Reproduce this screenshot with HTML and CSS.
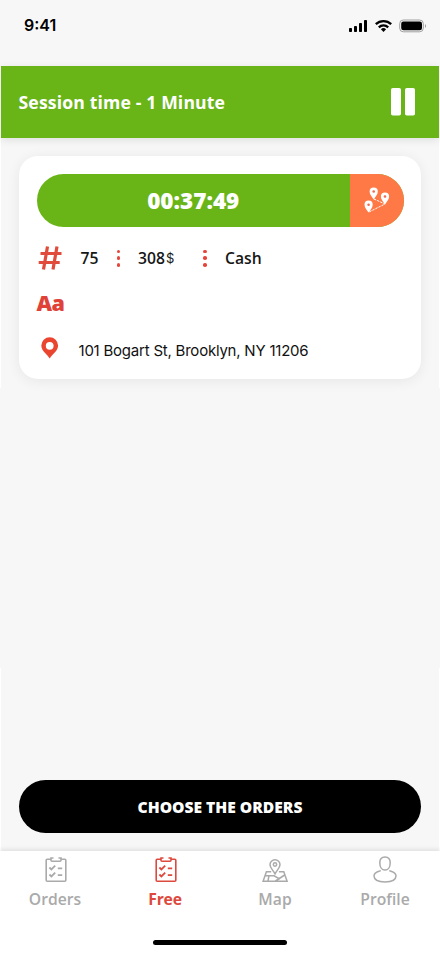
FILE: index.html
```
<!DOCTYPE html>
<html lang="en">
<head>
<meta charset="utf-8">
<title>Free orders</title>
<link rel="stylesheet" href="styles.css">
</head>
<body>
<div class="screen">
  <div class="status">
    <span class="clock">9:41</span>
    <svg class="status-icons" width="78" height="14" viewBox="0 0 78 14">
      <rect x="0" y="9" width="3" height="4" rx=".8"/><rect x="5" y="7" width="3" height="6" rx=".8"/><rect x="10" y="4" width="3" height="9" rx=".8"/><rect x="15" y="1" width="3" height="12" rx=".8"/>
      <g fill="none" stroke="#000" stroke-width="2.300"><path d="M26.800 5.200a11.200 11.200 0 0 1 15.400 0"/><path d="M29.800 8.300a6.800 6.800 0 0 1 9.400 0"/></g>
      <path d="M34.500 12.900l-2.600-2.600a3.700 3.700 0 0 1 5.200 0z"/>
      <rect x="50.700" y="1" width="23.600" height="11.800" rx="3.600" fill="none" stroke="#a0a0a0"/>
      <rect x="52.200" y="2.500" width="20.800" height="8.800" rx="2.200"/>
      <path d="M76 5v4q2-2 0-4z" fill="#999"/>
    </svg>
  </div>
  <main class="content">
    <header class="session">
      <span class="session-title">Session time - 1 Minute</span>
      <svg width="24" height="28" viewBox="0 0 24 28" fill="#fff"><rect width="10" height="27.500" rx="1.800"/><rect x="14" width="10" height="27.500" rx="1.800"/></svg>
    </header>
    <section class="card">
      <div class="timer">
        <div class="time"><span>00:37:49</span></div>
        <div class="route">
          <svg width="28" height="28" viewBox="0 0 28 28">
            <g fill="none" stroke="#fff" stroke-width="1" stroke-dasharray="2.400 1"><path d="M11 13l11 5L6 26"/></g>
            <g fill="#fff"><path id="pin" d="M10.700 13.400C9 10.500 6.600 8.600 6.600 5.500a4.100 4.100 0 0 1 8.200 0C14.800 8.600 12.400 10.500 10.700 13.400z"/><use href="#pin" x="11.300" y="5"/><use href="#pin" x="-5.100" y="13.200"/></g>
            <g fill="#f06a50"><circle cx="10.700" cy="5.500" r="1.300"/><circle cx="22" cy="10.500" r="1.300"/><circle cx="5.600" cy="18.700" r="1.300"/></g>
          </svg>
        </div>
      </div>
      <div class="facts">
        <svg class="hash" width="24" height="24" viewBox="0 0 24 24"><path d="M9.500.500L5.500 23.500M19 .500L15 23.500M2.500 7.500H23.500M.700 16.500H21.700" fill="none" stroke="#e04b3b" stroke-width="3.200"/></svg>
        <span class="number">75</span>
        <span class="dots"><i></i><i></i><i></i></span>
        <span class="amount">308</span><span class="currency">$</span>
        <span class="dots second"><i></i><i></i><i></i></span>
        <span class="method">Cash</span>
      </div>
      <div class="note">Aa</div>
      <div class="place">
        <svg width="18" height="22" viewBox="0 0 18 22"><path fill="#e9452f" fill-rule="evenodd" d="M8.700 21.600C7 18.200.300 14.200.300 8.600a8.400 8.400 0 0 1 16.800 0C17.100 14.200 10.400 18.200 8.700 21.600zM8.700 4.900a3.900 3.900 0 1 0 0 7.800 3.900 3.900 0 0 0 0-7.800z"/></svg>
        <span class="address">101 Bogart St, Brooklyn, NY 11206</span>
      </div>
    </section>
    <div class="choose"><span>CHOOSE THE ORDERS</span></div>
  </main>
  <nav class="tabs">
    <div class="tab">
      <svg class="list-icon" width="28" height="28" viewBox="0 0 28 28"><g id="list" fill="none" stroke="currentColor" stroke-width="1.600"><path d="M9 3.300H5.200a1 1 0 0 0-1 1v20a1 1 0 0 0 1 1h17.600a1 1 0 0 0 1-1v-20a1 1 0 0 0-1-1H19"/><path d="M11.500 2H9v2.300a1 1 0 0 0 1 1h8a1 1 0 0 0 1-1V2h-2.500"/><path d="M7.400 11.500l2 2L13.200 9.700M7.400 18.500l2 2 3.800-3.800M15.800 12.400h4.400M15.800 19.200h4.400" stroke-width="1.800"/></g></svg>
      <span>Orders</span>
    </div>
    <div class="tab active">
      <svg class="list-icon" width="28" height="28" viewBox="0 0 28 28"><use href="#list"/></svg>
      <span>Free</span>
    </div>
    <div class="tab">
      <svg class="map-icon" width="28" height="28" viewBox="0 0 28 28" fill="none" stroke="currentColor" stroke-width="1.500"><path d="M14 17.800C12.400 14.500 9 12 9 8.700a5 5 0 0 1 10 0c0 3.300-3.400 5.800-5 9.100z"/><circle cx="14" cy="8.500" r="1.700"/><path d="M10.200 15.700H5.400L2.100 25.200h24l-3.300-9.500h-4.900M4 19.500l9 .3 6 3.400M8 19.500l-1 5.500M24.400 18.500L14.500 25"/></svg>
      <span>Map</span>
    </div>
    <div class="tab">
      <svg class="profile-icon" width="28" height="28" viewBox="0 0 28 28" fill="none" stroke="currentColor" stroke-width="1.500"><path d="M14 .900c-3.200 0-5.200 2.300-5.200 5.800 0 4.500 2.200 7.300 5.200 7.300s5.200-2.800 5.200-7.300c0-3.500-2-5.800-5.200-5.800z"/><path d="M9.800 14.600c-3.700 1.500-6.800 2-6.800 5.200 0 3.900 3.500 6.200 11 6.200s11-2.300 11-6.200c0-3.200-3.100-3.700-6.800-5.200"/></svg>
      <span>Profile</span>
    </div>
  </nav>
  <div class="home"></div>
</div>
</body>
</html>
```
FILE: styles.css
```
* { box-sizing: border-box; }
body { margin: 0; background: #f7f7f7; font-family: "Open Sans", "Noto Sans", sans-serif; }
svg { display: block; flex: none; }
span { white-space: nowrap; }
.screen { width: 440px; height: 953px; display: flex; flex-direction: column; background: #f7f7f7; overflow: hidden; }
.status { height: 66px; padding: 19px 13px 0 24px; display: flex; justify-content: space-between; align-items: flex-start; }
.clock { font: 600 16px/13px Inter, sans-serif; }
.content { height: 785px; display: flex; flex-direction: column; padding: 0 1px; background: linear-gradient(#fff 0 322px, #f7f7f7 322px 602px, #fff 602px) 0 0 / 1px 100% no-repeat, linear-gradient(#fff 0 322px, #f7f7f7 322px 602px, #fff 602px) 100% 0 / 1px 100% no-repeat; }
.session { height: 71.500px; flex: none; background: #69b517; color: #fff; display: flex; align-items: center; justify-content: space-between; padding: 0 24px 0 17.500px; box-shadow: 0 2px 8px rgba(0,0,0,.1); }
.session-title { padding-top: 1px; font-size: 17.600px; font-weight: 700; letter-spacing: .150px; }
.card { width: 402px; height: 223px; margin: 18px 0 0 18px; padding: 18px 17.500px; flex: none; background: #fff; border-radius: 19px; box-shadow: 0 2px 14px rgba(0,0,0,.07); }
.timer { height: 53px; display: flex; border-radius: 27px; overflow: hidden; background: #69b517; }
.time { width: 313.500px; display: flex; align-items: center; justify-content: center; color: #fff; font-size: 22.500px; font-weight: 800; }
.route { flex: 1; background: #ff7946; display: flex; align-items: center; justify-content: center; }
.facts { height: 63px; display: flex; align-items: center; font-size: 15.700px; font-weight: 600; color: #171717; }
.hash { margin-left: 1px; }
.number { width: 36px; margin-left: 19px; }
.dots { width: 4px; height: 17px; display: flex; flex-direction: column; justify-content: space-between; }
.dots i { width: 3.500px; height: 3.500px; border-radius: 50%; background: #e5463b; }
.amount { width: 28px; margin-left: 17.500px; }
.currency { width: 37px; font: 400 13px/18px Inter, sans-serif; }
.method { margin-left: 18px; }
.note { height: 26px; line-height: 26px; font-size: 21.500px; font-weight: 800; letter-spacing: -.700px; color: #e04238; }
.place { height: 44px; margin-top: 19px; display: flex; align-items: flex-start; padding: 2px 0 0 4px; }
.address { margin-left: 20px; font: 400 15px/28px Inter, sans-serif; letter-spacing: -.220px; color: #111; }
.choose { width: 402px; height: 53px; margin: auto 0 18px 18px; border-radius: 27px; background: #000; color: #fff; display: flex; align-items: center; justify-content: center; font-size: 15.600px; font-weight: 800; }
.tabs { height: 89px; display: flex; background: #fff; box-shadow: 0 -1px 5px rgba(0,0,0,.12); }
.tab { flex: 1; display: flex; flex-direction: column; align-items: center; padding-top: 5px; color: #aaa; font-size: 15.700px; font-weight: 600; line-height: 22px; }
.tab span { margin-top: 4px; }
.tab .list-icon { margin-left: 2px; }
.tab .map-icon, .tab .profile-icon { margin-right: 1px; }
.active { color: #dd493d; font-weight: 700; letter-spacing: -.200px; }
.home { height: 13px; background: #fff; }
.home::before { content: ""; display: block; width: 134px; height: 5px; margin: 0 auto; border-radius: 3px; background: #000; }
```
